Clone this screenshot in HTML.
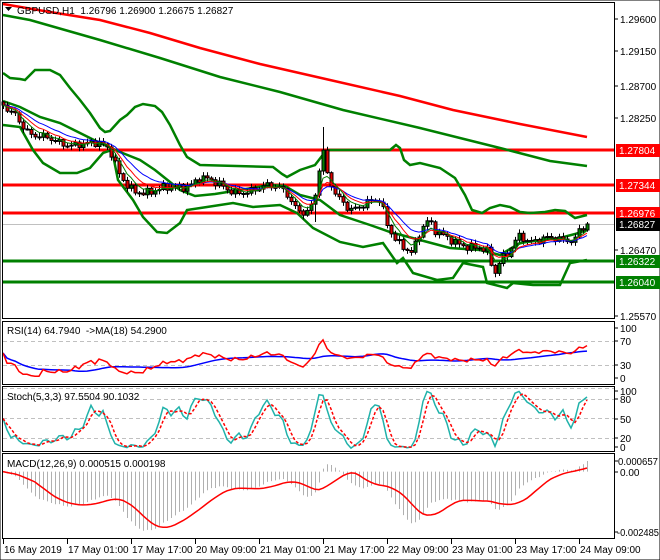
<!DOCTYPE html>
<html><head><meta charset="utf-8"><style>
html,body{margin:0;padding:0;background:#fff;}
svg{display:block;font-family:"Liberation Sans",sans-serif;font-size:10px;}
</style></head><body>
<svg id="s" width="660" height="560" xmlns="http://www.w3.org/2000/svg">
<rect width="660" height="560" fill="#fff"/>
</svg>
<script>
(function(){
var S=document.getElementById('s'),out=[];
function pl(pts,c,w,extra){out.push('<polyline fill="none" stroke="'+c+'" stroke-width="'+w+'" '+(extra||'')+' points="'+pts.map(function(p){return p[0].toFixed(1)+','+p[1].toFixed(1)}).join(' ')+'"/>');}
function ln(x1,y1,x2,y2,c,w,extra){out.push('<line x1="'+x1+'" y1="'+y1+'" x2="'+x2+'" y2="'+y2+'" stroke="'+c+'" stroke-width="'+w+'" '+(extra||'')+'/>');}
function tx(x,y,t,c,extra){out.push('<text x="'+x+'" y="'+y+'" fill="'+(c||'#000')+'" '+(extra||'')+'>'+t+'</text>');}
function interp(keys,x){for(var k=0;k<keys.length-1;k++){if(x<=keys[k+1][0]){var a=keys[k],b=keys[k+1];return a[1]+(b[1]-a[1])*(x-a[0])/(b[0]-a[0]);}}return keys[keys.length-1][1];}
var keys=[[3,105],[15,112],[30,135],[45,140],[60,143],[80,142],[100,146],[110,152],[120,175],[135,190],[150,195],[170,187],[190,183],[200,178],[215,185],[230,190],[250,190],[270,188],[285,190],[295,205],[305,212],[313,205],[318,180],[322,148],[326,175],[335,195],[350,207],[370,202],[380,203],[388,230],[396,240],[404,245],[412,250],[420,230],[428,222],[436,235],[445,238],[460,242],[480,248],[488,255],[494,278],[500,262],[508,252],[515,238],[520,232],[530,242],[545,241],[560,240],[575,237],[579,226],[583,226],[587,224]];
var N=147,X=[],C=[],O=[],H=[],L=[];
for(var i=0;i<N;i++){var x=3+4*i;X.push(x);var c=interp(keys,x)+2.5*Math.sin(i*1.7)+1.8*Math.sin(i*3.1)+3*Math.sin(i*0.45);if(i==N-1)c=224;C.push(c);}
for(i=0;i<N;i++){O.push(i?C[i-1]:C[0]-3);H.push(Math.min(O[i],C[i])-1-Math.abs(3*Math.sin(i*2.3)));L.push(Math.max(O[i],C[i])+1+Math.abs(3*Math.cos(i*1.3)));}
H[80]=127;L[78]=222;
ln(3,150,614,150,'#ff0000',3);ln(3,185,614,185,'#ff0000',3);ln(3,213,614,213,'#ff0000',3);
ln(3,224.5,614,224.5,'#c0c0c0',1);
ln(3,261,614,261,'#008000',3);ln(3,282,614,282,'#008000',3);
pl([[3,4],[50,12],[100,20],[150,33],[200,48],[260,64],[330,80],[400,96],[453,110],[520,124],[587,137]],'#ff0000',2.5);
pl([[3,15],[30,20],[100,40],[160,58],[220,77],[280,92],[343,110],[420,128],[500,148],[550,161],[587,166]],'#008000',2.5);
pl([[3,73],[10,78],[20,79],[25,80],[35,70],[50,70],[60,75],[70,88],[80,100],[90,113],[100,128],[105,132],[110,131],[120,120],[127,115],[135,107],[143,104],[155,106],[162,112],[170,125],[180,145],[187,157],[200,165],[273,167],[282,174],[287,177],[300,170],[315,165],[325,152],[330,150],[350,150],[390,150],[396,145],[400,148],[404,160],[410,165],[420,163],[440,168],[455,178],[465,195],[472,210],[482,213],[490,208],[500,205],[510,207],[520,212],[530,213],[545,212],[555,210],[565,211],[575,218],[587,215]],'#008000',2.5);
pl([[3,101],[20,107],[40,117],[60,123],[80,133],[100,143],[120,152],[140,160],[155,170],[165,178],[180,190],[195,196],[215,194],[240,190],[270,185],[285,186],[300,195],[320,200],[340,215],[370,225],[390,232],[420,240],[450,248],[480,250],[500,255],[520,243],[540,240],[560,238],[575,234],[587,230]],'#008000',2.5);
pl([[3,125],[20,127],[33,150],[43,163],[60,173],[77,173],[90,168],[103,153],[112,150],[118,180],[133,200],[143,217],[157,232],[167,233],[180,223],[187,210],[207,207],[233,203],[253,207],[280,205],[297,213],[313,228],[340,242],[363,247],[383,243],[397,263],[403,258],[413,273],[437,280],[453,278],[463,263],[483,267],[487,283],[507,288],[513,283],[533,285],[560,285],[570,263],[587,260]],'#008000',2.5);
function ema(a,p){var k=2/(p+1),r=[a[0]];for(var i=1;i<a.length;i++)r.push(r[i-1]+k*(a[i]-r[i-1]));return r;}
var eB=ema(C,13),eR=ema(C,8),eG=ema(C,5);
for(i=0;i<N;i++){var x=X[i];ln(x+0.5,H[i],x+0.5,L[i],'#000',1);var t=Math.min(O[i],C[i]),b=Math.max(O[i],C[i]);if(b-t<1)b=t+1;
out.push('<rect x="'+(x-1)+'" y="'+t.toFixed(1)+'" width="3" height="'+(b-t).toFixed(1)+'" fill="'+(C[i]<O[i]?'#008000':'#e00000')+'" stroke="#000" stroke-width="1"/>');}
pl(eB.map(function(v,i){return[X[i],v]}),'#0000ff',1);
pl(eR.map(function(v,i){return[X[i],v]}),'#ff0000',1);
pl(eG.map(function(v,i){return[X[i],v]}),'#008000',1);
var P=C.map(function(v){return -v});
var ag=0.5,al=0.5,rsi=[];for(i=0;i<N;i++){var d=i?P[i]-P[i-1]:0;var g=Math.max(d,0),l=Math.max(-d,0);ag=(ag*13+g)/14;al=(al*13+l)/14;var r=100-100/(1+ag/al);rsi.push(r);}
var rma=[];for(i=0;i<N;i++){var s=0,n=0;for(var j=Math.max(0,i-17);j<=i;j++){s+=rsi[j];n++;}rma.push(s/n);}
function ry(v){return 383-0.6*v;}
ln(3,341.5,614,341.5,'#c0c0c0',1,'stroke-dasharray="4,3"');ln(3,365.5,614,365.5,'#c0c0c0',1,'stroke-dasharray="4,3"');
pl(rma.map(function(v,i){return[X[i],ry(v)]}),'#0000ff',1.5);
pl(rsi.map(function(v,i){return[X[i],ry(v)]}),'#ff0000',1.5);
var kr=[];for(i=0;i<N;i++){var hh=-1e9,ll=1e9;for(j=Math.max(0,i-7);j<=i;j++){hh=Math.max(hh,-H[j]);ll=Math.min(ll,-L[j]);}kr.push(hh==ll?50:100*(P[i]-ll)/(hh-ll));}
function sma(a,p){var r=[];for(var i=0;i<a.length;i++){var s=0,n=0;for(var j=Math.max(0,i-p+1);j<=i;j++){s+=a[j];n++;}r.push(s/n);}return r;}
var K=sma(kr,2),D=sma(K,3);
function sy(v){return 451-0.65*v;}
[388.5,399.5,418.5,438.5].forEach(function(y){ln(3,y,614,y,'#c0c0c0',1,'stroke-dasharray="4,3"');});
pl(K.map(function(v,i){return[X[i],sy(v)]}),'#20b2aa',1.5);
pl(D.map(function(v,i){return[X[i],sy(v)]}),'#ff0000',1.5,'stroke-dasharray="3,2"');
var e12=ema(P,12),e26=ema(P,26),m=[];for(i=0;i<N;i++)m.push((e12[i]-e26[i])/7483);
var sg=sma(m,9);function my(v){return 471.6-v*26735;}
for(i=0;i<N;i++){ln(X[i]+0.5,471.6,X[i]+0.5,my(m[i]),'#b0b0b0',1);}
pl(sg.map(function(v,i){return[X[i],my(v)]}),'#ff0000',1.5);
out.push('<rect x="2.5" y="2.5" width="612" height="316" fill="none" stroke="#000"/>');
out.push('<rect x="2.5" y="321.5" width="612" height="63" fill="none" stroke="#000"/>');
out.push('<rect x="2.5" y="386.5" width="612" height="65" fill="none" stroke="#000"/>');
out.push('<rect x="2.5" y="453.5" width="612" height="85" fill="none" stroke="#000"/>');
out.push('<rect x="0" y="0" width="660" height="560" fill="none" stroke="#000" stroke-width="1"/>');
out.push('<path d="M5,7 L12,7 L8.5,11 Z" fill="#000"/>');
tx(17,14,'GBPUSD,H1&#160;&#160;1.26796 1.26900 1.26675 1.26827');
tx(7,334,'RSI(14) 64.7940&#160;&#160;-&gt;MA(18) 54.2900');
tx(7,400,'Stoch(5,3,3) 97.5504 90.1032');
tx(7,467,'MACD(12,26,9) 0.000515 0.000198');
function tick(y){ln(614,y,618,y,'#000',1);}
[[19,'1.29600'],[51,'1.29150'],[86,'1.28700'],[118,'1.28250'],[250,'1.26470'],[316,'1.25570']].forEach(function(a){tick(a[0]);tx(620,a[0]+4,a[1]);});
[[150,'1.27804','#ff0000'],[185,'1.27344','#ff0000'],[213,'1.26976','#ff0000'],[224,'1.26827','#000'],[261,'1.26322','#008000'],[282,'1.26040','#008000']].forEach(function(a){out.push('<rect x="616" y="'+(a[0]-6)+'" width="44" height="13" fill="'+a[2]+'"/>');tx(619,a[0]+4,a[1],'#fff');});
[[328,'100'],[341,'70'],[365,'30'],[378,'0']].forEach(function(a){tick(a[0]);tx(620,a[0]+4,a[1]);});
[[391,'100'],[399,'80'],[419,'50'],[438,'20'],[447,'0']].forEach(function(a){tick(a[0]);tx(620,a[0]+4,a[1]);});
tick(461);tx(618,465,'0.000657','#000','textLength="40" lengthAdjust="spacingAndGlyphs"');
tick(472);tx(620,476,'0.00');
tick(532);tx(617,536,'-0.002485','#000','textLength="42" lengthAdjust="spacingAndGlyphs"');
var tl=['16 May 2019','17 May 01:00','17 May 17:00','20 May 09:00','21 May 01:00','21 May 17:00','22 May 09:00','23 May 01:00','23 May 17:00','24 May 09:00'];
tl.forEach(function(t,k){var x=3+64*k;ln(x+0.5,539,x+0.5,544,'#000',1);tx(x+1,553,t);});
S.insertAdjacentHTML('beforeend',out.join(''));
})();
</script>
</body></html>
